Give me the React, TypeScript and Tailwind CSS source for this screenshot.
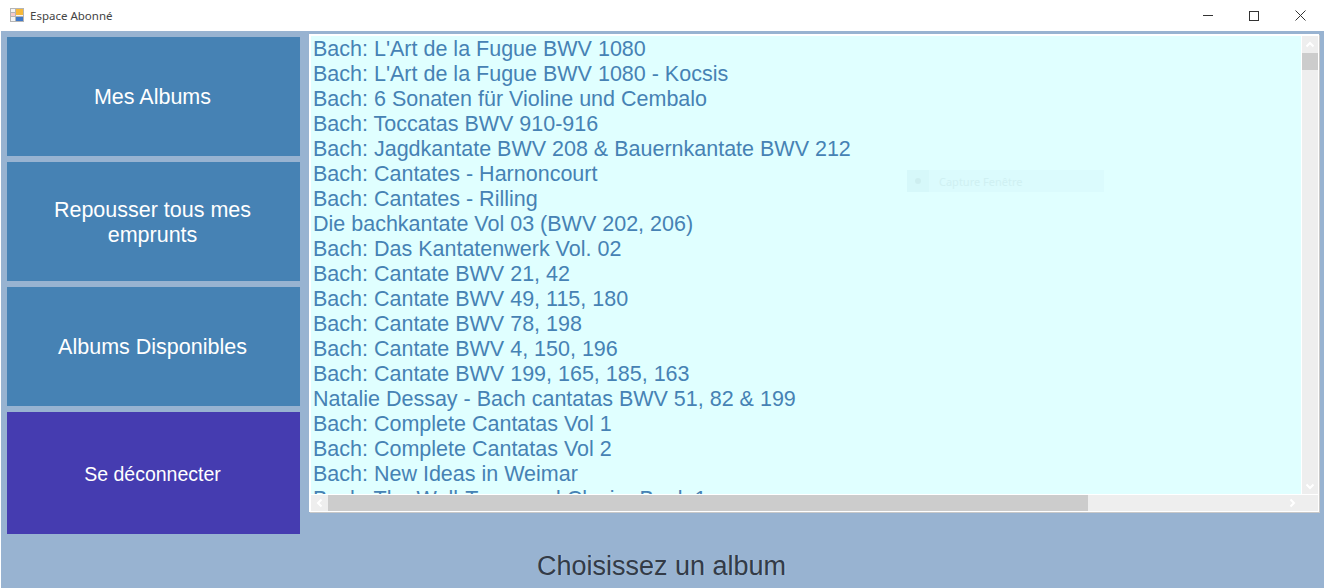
import React from "react";

const albums = [
  "Bach: L'Art de la Fugue BWV 1080",
  "Bach: L'Art de la Fugue BWV 1080 - Kocsis",
  "Bach: 6 Sonaten für Violine und Cembalo",
  "Bach: Toccatas BWV 910-916",
  "Bach: Jagdkantate BWV 208 & Bauernkantate BWV 212",
  "Bach: Cantates - Harnoncourt",
  "Bach: Cantates - Rilling",
  "Die bachkantate Vol 03 (BWV 202, 206)",
  "Bach: Das Kantatenwerk Vol. 02",
  "Bach: Cantate BWV 21, 42",
  "Bach: Cantate BWV 49, 115, 180",
  "Bach: Cantate BWV 78, 198",
  "Bach: Cantate BWV 4, 150, 196",
  "Bach: Cantate BWV 199, 165, 185, 163",
  "Natalie Dessay - Bach cantatas BWV 51, 82 & 199",
  "Bach: Complete Cantatas Vol 1",
  "Bach: Complete Cantatas Vol 2",
  "Bach: New Ideas in Weimar",
  "Bach: The Well-Tempered Clavier Book 1",
];

const MenuButton = ({
  label,
  className,
}: {
  label: string;
  className: string;
}) => (
  <button
    type="button"
    className={`flex w-[293px] items-center justify-center pl-[39px] pr-[41px] pt-[2px] text-center text-white ${className}`}
  >
    {label}
  </button>
);

const Chevron = ({ d }: { d: string }) => (
  <svg width="10" height="10" viewBox="0 0 10 10" fill="none">
    <path d={d} stroke="#ffffff" strokeWidth="2" />
  </svg>
);

const App = () => {
  return (
    <div className="flex h-[588px] w-[1324px] flex-col overflow-hidden bg-white font-['Liberation_Sans',Arial,sans-serif]">
      {/* title bar */}
      <div className="flex h-[31px] shrink-0 items-center">
        <svg width="14" height="14" viewBox="0 0 14 14" className="ml-[10px] mb-[1px]">
          <rect x="0.5" y="0.5" width="13" height="13" fill="#f4f4f4" stroke="#b5b5b5" />
          <rect x="6" y="1" width="7" height="6" fill="#f7b93a" />
          <rect x="6" y="8" width="7" height="5" fill="#3f78c8" />
          <rect x="1" y="5" width="4" height="3" fill="#f3c9c9" />
          <path d="M0 4.5H5.5M0 8.5H14M5.5 0V14" stroke="#b5b5b5" />
        </svg>
        <span className="ml-[6px] font-['Noto_Sans',sans-serif] text-[11.5px] text-[#444444]">
          Espace Abonné
        </span>
        <div className="ml-auto flex items-center">
          <div className="flex h-[31px] w-[46px] items-center justify-center">
            <div className="h-px w-[10px] bg-[#333333]" />
          </div>
          <div className="flex h-[31px] w-[46px] items-center justify-center">
            <div className="h-[10px] w-[10px] border border-[#333333]" />
          </div>
          <div className="mr-[1px] flex h-[31px] w-[46px] items-center justify-center">
            <svg width="11" height="11" viewBox="0 0 11 11" fill="none">
              <path d="M0.5 0.5L10.5 10.5M10.5 0.5L0.5 10.5" stroke="#333333" />
            </svg>
          </div>
        </div>
      </div>

      {/* window body */}
      <div className="ml-px flex min-h-0 flex-1 flex-col bg-[#98b3d1]">
        <div className="flex">
          <div className="ml-[6px] mt-[6px] flex flex-col gap-[6px] text-[21.5px] leading-[25px]">
            <MenuButton label="Mes Albums" className="h-[119px] bg-[#4682b4]" />
            <MenuButton label="Repousser tous mes emprunts" className="h-[119px] bg-[#4682b4]" />
            <MenuButton label="Albums Disponibles" className="h-[119px] bg-[#4682b4]" />
            <MenuButton label="Se déconnecter" className="h-[122px] bg-[#453cb0] text-[19.5px]" />
          </div>

          {/* album list */}
          <div className="relative ml-[9px] mt-[3px] flex h-[478px] w-[1010px] flex-col self-start border-t-2 border-r border-b border-l-2 border-white bg-white shadow-[1px_1px_0_#c8c8c8]">
            <div className="flex min-h-0 flex-1">
              <div className="relative min-w-0 flex-1 overflow-hidden bg-[#e0ffff] pl-[2px] pt-[1px] text-[21.5px] leading-[25px] text-[#4682b4]">
                {albums.map((album) => (
                  <div key={album} className="whitespace-nowrap">
                    {album}
                  </div>
                ))}
                <div className="absolute left-[596px] top-[134px] flex h-[22px] w-[197px] items-center bg-[#dbfbfd]">
                  <div className="flex h-[22px] w-[22px] items-center justify-center bg-[#d6f8fa]">
                    <div className="h-[6px] w-[6px] rounded-full bg-[#cdeef0]" />
                  </div>
                  <span className="ml-[10px] font-['Noto_Sans',sans-serif] text-[11px] text-[#cff0f2]">
                    Capture Fenêtre
                  </span>
                </div>
              </div>
              <div className="ml-px flex w-[16px] flex-col bg-[#eeeeee]">
                <div className="flex h-[17px] items-center justify-center">
                  <Chevron d="M1.5 6.5L5 3L8.5 6.5" />
                </div>
                <div className="h-[17px] bg-[#cccccc]" />
                <div className="flex-1" />
                <div className="flex h-[17px] items-center justify-center">
                  <Chevron d="M1.5 3.5L5 7L8.5 3.5" />
                </div>
              </div>
            </div>
            <div className="mt-px flex h-[16px] shrink-0 bg-[#eeeeee]">
              <div className="flex w-[17px] items-center justify-center">
                <Chevron d="M6.5 1.5L3 5L6.5 8.5" />
              </div>
              <div className="w-[760px] bg-[#cccccc]" />
              <div className="flex-1" />
              <div className="mr-[18px] flex w-[17px] items-center justify-center">
                <Chevron d="M3.5 1.5L7 5L3.5 8.5" />
              </div>
            </div>
          </div>
        </div>

        <div className="flex flex-1 items-end justify-center pb-[7px] pr-[2px] text-[27px] leading-[30px] text-[#333b47] [text-shadow:1px_0_0_rgba(255,255,255,0.2)]">
          Choisissez un album
        </div>
      </div>
    </div>
  );
};

export default App;
